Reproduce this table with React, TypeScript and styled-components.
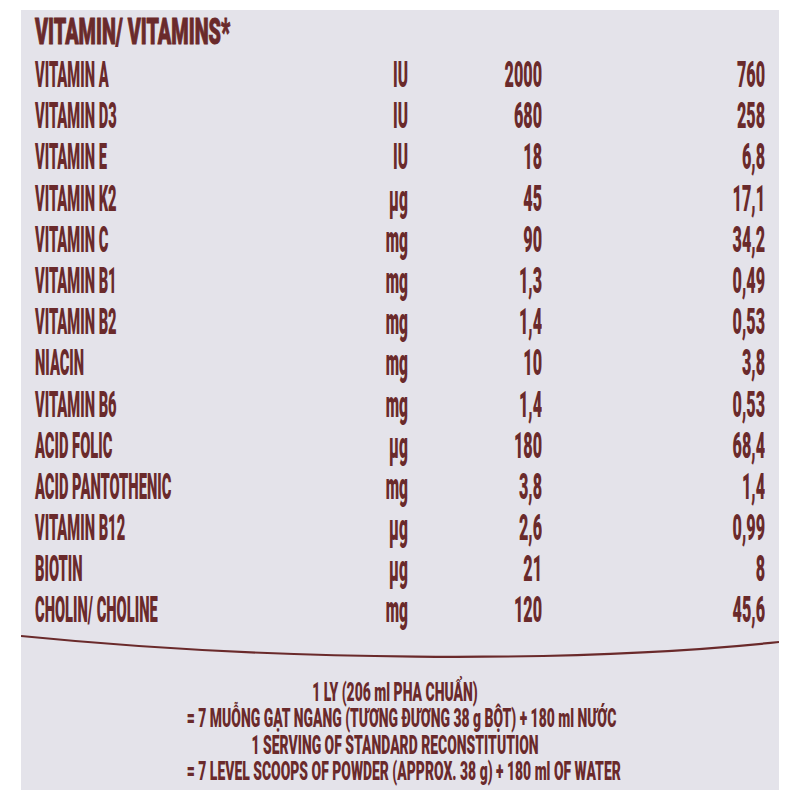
import React from 'react';
import styled, { createGlobalStyle } from 'styled-components';

const INK = '#6a2a2b';

const GlobalStyle = createGlobalStyle`
  html, body {
    margin: 0;
    padding: 0;
    background: #ffffff;
  }
`;

const Page = styled.div`
  width: 800px;
  height: 800px;
  padding: 10px 21px;
  box-sizing: border-box;
  background: #ffffff;
`;

const Card = styled.div`
  width: 758px;
  height: 780px;
  background: #e4e3ea;
  box-sizing: border-box;
  padding: 2px 0 0 0;
  display: flex;
  flex-direction: column;
  font-family: Roboto, 'Liberation Sans', sans-serif;
  font-weight: 900;
  color: ${INK};
  overflow: hidden;
`;

// the print is a tall condensed face; squeeze a regular face sideways
const Squeezed = styled.div<{ $origin: 'left' | 'right' | 'center'; $scale: number }>`
  white-space: nowrap;
  transform: scaleX(${({ $scale }) => $scale});
  transform-origin: ${({ $origin }) => $origin} center;
  text-align: ${({ $origin }) => $origin};
`;

const NAME = 0.408;
const UNIT = 0.431;
const NUMBER = 0.449;

const HeadingRow = styled.div`
  padding-left: 14px;
  font-size: 36px;
  line-height: 41px;
  margin-bottom: 2px;
  -webkit-text-stroke: 1px ${INK};
`;

const Table = styled.div`
  display: grid;
  grid-template-columns: 300px 73px 134px 223px;
  grid-auto-rows: 41.2px;
  padding: 0 14px;
  font-size: 36px;
  line-height: 41.2px;
`;

const Divider = styled.svg`
  display: block;
  width: 758px;
  height: 30px;
`;

const Footer = styled.div`
  margin-top: 18px;
  padding-right: 10px;
  display: flex;
  flex-direction: column;
  font-size: 25px;
  line-height: 26.6px;
`;

type Row = [string, string, string, string];

const rows: Row[] = [
  ['VITAMIN A', 'IU', '2000', '760'],
  ['VITAMIN D3', 'IU', '680', '258'],
  ['VITAMIN E', 'IU', '18', '6,8'],
  ['VITAMIN K2', 'µg', '45', '17,1'],
  ['VITAMIN C', 'mg', '90', '34,2'],
  ['VITAMIN B1', 'mg', '1,3', '0,49'],
  ['VITAMIN B2', 'mg', '1,4', '0,53'],
  ['NIACIN', 'mg', '10', '3,8'],
  ['VITAMIN B6', 'mg', '1,4', '0,53'],
  ['ACID FOLIC', 'µg', '180', '68,4'],
  ['ACID PANTOTHENIC', 'mg', '3,8', '1,4'],
  ['VITAMIN B12', 'µg', '2,6', '0,99'],
  ['BIOTIN', 'µg', '21', '8'],
  ['CHOLIN/ CHOLINE', 'mg', '120', '45,6'],
];

const footerLines = [
  '1 LY (206 ml PHA CHUẨN)',
  '= 7 MUỖNG GẠT NGANG (TƯƠNG ĐƯƠNG 38 g BỘT) + 180 ml NƯỚC',
  '1 SERVING OF STANDARD RECONSTITUTION',
  '= 7 LEVEL SCOOPS OF POWDER (APPROX. 38 g) + 180 ml OF WATER',
];

export default function App() {
  return (
    <Page>
      <GlobalStyle />
      <Card>
        <HeadingRow>
          <Squeezed $origin="left" $scale={0.55}>
            VITAMIN/ VITAMINS*
          </Squeezed>
        </HeadingRow>
        <Table>
          {rows.map(([name, unit, amount, serving]) => (
            <React.Fragment key={name}>
              <Squeezed $origin="left" $scale={NAME}>{name}</Squeezed>
              <Squeezed $origin="right" $scale={UNIT}>{unit}</Squeezed>
              <Squeezed $origin="right" $scale={NUMBER}>{amount}</Squeezed>
              <Squeezed $origin="right" $scale={NUMBER}>{serving}</Squeezed>
            </React.Fragment>
          ))}
        </Table>
        <Divider viewBox="0 0 758 30" preserveAspectRatio="none">
          <path
            d="M0 4 C 250 29, 550 32, 758 10"
            fill="none"
            stroke={INK}
            strokeWidth="2.2"
          />
        </Divider>
        <Footer>
          {footerLines.map((line) => (
            <Squeezed key={line} $origin="center" $scale={0.557}>
              {line}
            </Squeezed>
          ))}
        </Footer>
      </Card>
    </Page>
  );
}
